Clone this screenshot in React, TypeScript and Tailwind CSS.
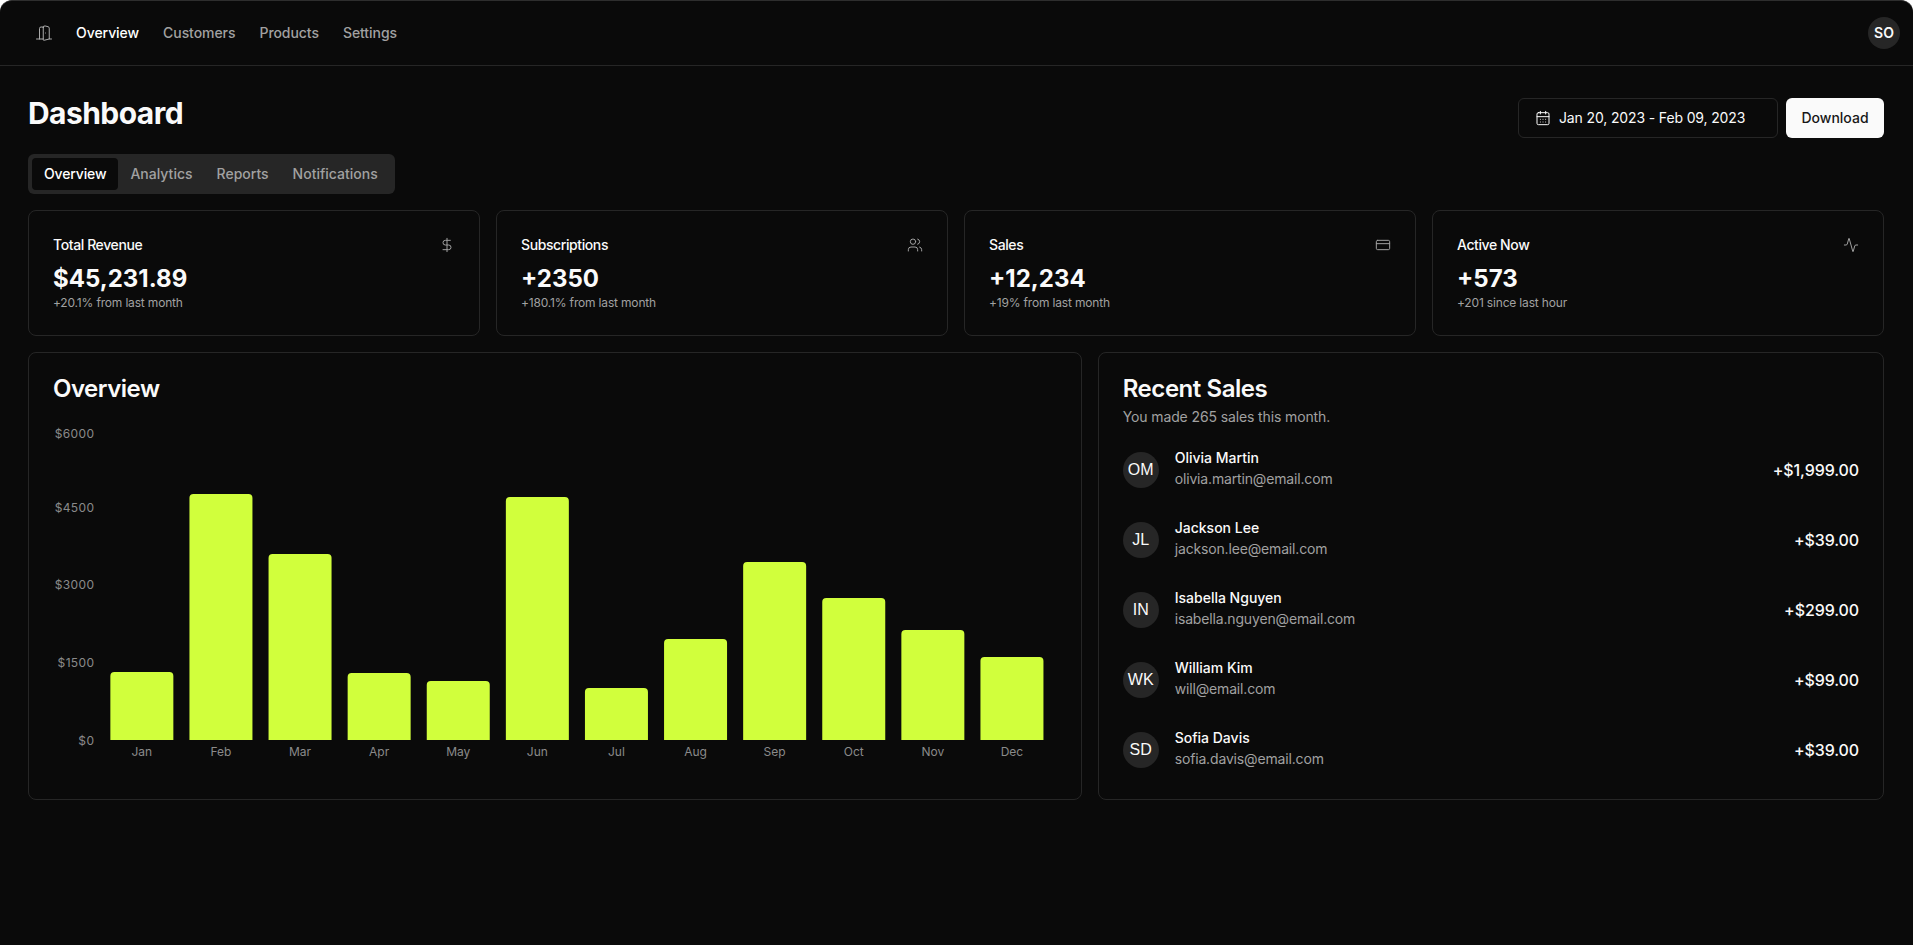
import React from 'react';
import { Activity, CalendarDays, CreditCard, DollarSign, DoorOpen, Users } from 'lucide-react';

const navLinks = ['Overview', 'Customers', 'Products', 'Settings'];
const tabs = ['Overview', 'Analytics', 'Reports', 'Notifications'];

const stats = [
  { title: 'Total Revenue', value: '$45,231.89', note: '+20.1% from last month', Icon: DollarSign },
  { title: 'Subscriptions', value: '+2350', note: '+180.1% from last month', Icon: Users },
  { title: 'Sales', value: '+12,234', note: '+19% from last month', Icon: CreditCard },
  { title: 'Active Now', value: '+573', note: '+201 since last hour', Icon: Activity },
];

const months = [
  { name: 'Jan', height: 68 },
  { name: 'Feb', height: 246 },
  { name: 'Mar', height: 186 },
  { name: 'Apr', height: 67 },
  { name: 'May', height: 59 },
  { name: 'Jun', height: 243 },
  { name: 'Jul', height: 52 },
  { name: 'Aug', height: 101 },
  { name: 'Sep', height: 178 },
  { name: 'Oct', height: 142 },
  { name: 'Nov', height: 110 },
  { name: 'Dec', height: 83 },
];

const ticks = [
  { label: '$6000', y: 8 },
  { label: '$4500', y: 82.7 },
  { label: '$3000', y: 159.7 },
  { label: '$1500', y: 237.3 },
  { label: '$0', y: 315 },
];

const sales = [
  { initials: 'OM', name: 'Olivia Martin', email: 'olivia.martin@email.com', amount: '+$1,999.00' },
  { initials: 'JL', name: 'Jackson Lee', email: 'jackson.lee@email.com', amount: '+$39.00' },
  { initials: 'IN', name: 'Isabella Nguyen', email: 'isabella.nguyen@email.com', amount: '+$299.00' },
  { initials: 'WK', name: 'William Kim', email: 'will@email.com', amount: '+$99.00' },
  { initials: 'SD', name: 'Sofia Davis', email: 'sofia.davis@email.com', amount: '+$39.00' },
];

const BASELINE = 315;

const OverviewChart = () => (
  <svg viewBox="0 0 1003 350" className="block h-[350px] w-full text-xs">
    {ticks.map(tick => (
      <text key={tick.label} x={41} y={tick.y + 4.5} textAnchor="end" fill="#8a8a8a" className="tracking-[0.35px]">
        {tick.label}
      </text>
    ))}
    {months.map((month, i) => {
      const x = 57 + i * 79.1;
      const top = BASELINE - month.height;
      return (
        <g key={month.name}>
          <path
            d={`M${x} ${BASELINE}V${top + 4}a4 4 0 0 1 4-4h55a4 4 0 0 1 4 4V${BASELINE}z`}
            fill="#d1ff3c"
          />
          <text x={x + 31.5} y={331} textAnchor="middle" fill="#8a8a8a">
            {month.name}
          </text>
        </g>
      );
    })}
  </svg>
);

const App = () => {
  return (
    <div className="min-h-screen rounded-t-xl border-t border-[#2e2e2e] bg-[#0a0a0a] font-['Inter',sans-serif] text-[#fafafa]">
      <header className="flex h-[65px] items-center justify-between border-b border-[#262626] pl-[35px] pr-[13px]">
        <nav className="flex items-center">
          <DoorOpen size={18} strokeWidth={1.25} className="mr-[23px] text-[#b5b5b5]" />
          <div className="flex items-center gap-6">
            {navLinks.map((link, i) => (
              <a
                key={link}
                className={`text-sm font-medium tracking-[-0.06px] ${i === 0 ? 'text-white' : 'text-[#a1a1a1]'}`}
              >
                {link}
              </a>
            ))}
          </div>
        </nav>
        <div className="flex h-8 w-8 items-center justify-center rounded-full bg-[#262626] text-sm font-semibold">
          SO
        </div>
      </header>

      <main className="pl-7 pr-[29px] pt-8">
        <div className="flex items-start justify-between">
          <h1 className="text-3xl font-bold leading-[30px] tracking-[-0.55px]">Dashboard</h1>
          <div className="flex items-center gap-2">
            <button className="flex h-10 w-[260px] items-center gap-2 rounded-md border border-[#262626] px-4 text-sm tracking-[-0.14px]">
              <CalendarDays size={16} strokeWidth={1.5} />
              <span>Jan 20, 2023 - Feb 09, 2023</span>
            </button>
            <button className="h-10 w-[98px] rounded-md bg-[#fafafa] text-sm font-medium text-[#171717]">
              Download
            </button>
          </div>
        </div>

        <div className="mt-4 inline-flex h-10 items-center rounded-md bg-[#262626] py-1 pl-1 pr-[5px]">
          {tabs.map((tab, i) => (
            <button
              key={tab}
              className={`h-8 rounded-[4px] px-3 text-sm font-medium ${
                i === 0 ? 'bg-[#0a0a0a] tracking-[-0.14px] text-white' : 'text-[#a1a1a1]'
              }`}
            >
              {tab}
            </button>
          ))}
        </div>

        <div className="mt-4 grid grid-cols-4 gap-4">
          {stats.map(({ title, value, note, Icon }) => (
            <div key={title} className="rounded-lg border border-[#262626] p-6">
              <div className="flex items-center justify-between pb-2">
                <h3 className="text-sm font-medium tracking-[-0.4px]">{title}</h3>
                <Icon size={16} strokeWidth={1.5} className="text-[#a1a1a1]" />
              </div>
              <div className="text-2xl font-bold">{value}</div>
              <p className="text-xs tracking-[-0.17px] text-[#a1a1a1]">{note}</p>
            </div>
          ))}
        </div>

        <div className="mt-4 grid grid-cols-7 gap-4">
          <div className="col-span-4 rounded-lg border border-[#262626] p-6">
            <h2 className="text-2xl font-semibold leading-none tracking-[-0.5px]">Overview</h2>
            <div className="mt-6">
              <OverviewChart />
            </div>
          </div>

          <div className="col-span-3 rounded-lg border border-[#262626] p-6">
            <h2 className="text-2xl font-semibold leading-none tracking-[-0.45px]">Recent Sales</h2>
            <p className="mt-1.5 text-sm tracking-[-0.12px] text-[#a1a1a1]">You made 265 sales this month.</p>
            <div className="mt-6 space-y-8">
              {sales.map(sale => (
                <div key={sale.email} className="flex items-center">
                  <div className="flex h-9 w-9 items-center justify-center rounded-full bg-[#262626] font-['Liberation_Sans',sans-serif]">
                    {sale.initials}
                  </div>
                  <div className="ml-4 space-y-1">
                    <p className="text-sm font-medium leading-none">{sale.name}</p>
                    <p className="text-sm tracking-[-0.16px] text-[#a1a1a1]">{sale.email}</p>
                  </div>
                  <div className="ml-auto font-medium tracking-[-0.1px]">{sale.amount}</div>
                </div>
              ))}
            </div>
          </div>
        </div>
      </main>
    </div>
  );
};

export default App;
